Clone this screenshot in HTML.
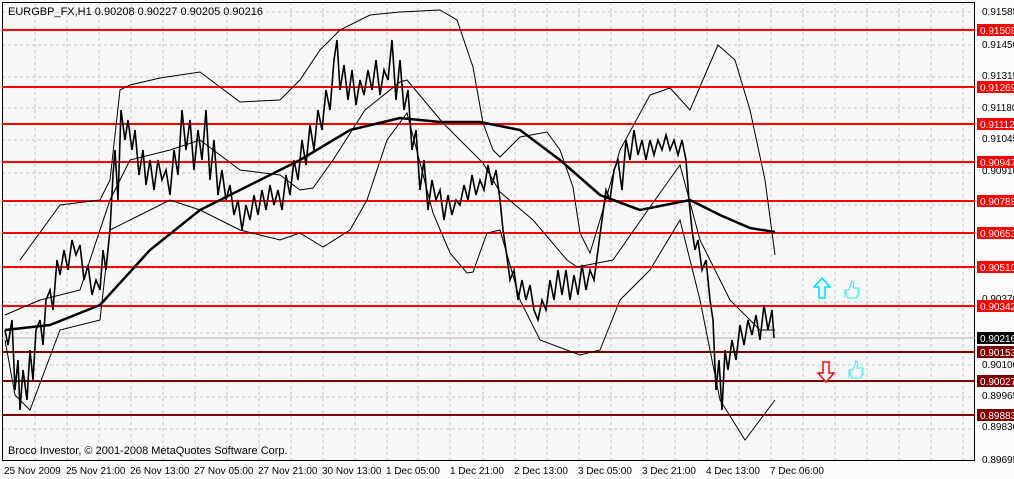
<!DOCTYPE html><html><head><style>body{margin:0;background:#fff}svg{display:block;font-family:"Liberation Sans",sans-serif}</style></head><body>
<svg width="1014" height="479" viewBox="0 0 1014 479">
<rect width="1014" height="479" fill="#fbfbfb"/>
<rect x="2" y="2" width="973" height="459" fill="#f7f7f7"/>
<g stroke="#c4c4c4" stroke-dasharray="3,3" stroke-width="1">
<path d="M35 2V460M67 2V460M99 2V460M131 2V460M163 2V460M195 2V460M227 2V460M259 2V460M291 2V460M323 2V460M355 2V460M387 2V460M418 2V460M450 2V460M483 2V460M515 2V460M547 2V460M579 2V460M611 2V460M643 2V460M675 2V460M707 2V460M739 2V460M771 2V460M803 2V460M835 2V460M867 2V460M899 2V460M931 2V460M963 2V460"/>
<path d="M2 12H975M2 45H975M2 77H975M2 108H975M2 140H975M2 173H975M2 205H975M2 237H975M2 268H975M2 302H975M2 333H975M2 365H975M2 397H975M2 429H975"/>
</g>
<rect x="2.5" y="2.5" width="972" height="458" fill="none" stroke="#000"/>
<g stroke="#f00" stroke-width="2"><path d="M2 30H975M2 87H975M2 124H975M2 162H975M2 201H975M2 233H975M2 267H975M2 306H975"/></g>
<g stroke="#800000" stroke-width="2"><path d="M2 352H975M2 381H975M2 415H975"/></g>
<path d="M2 338H975" stroke="#b0b0b0"/>
<polyline fill="none" stroke="#000" stroke-width="1" points="20,260 60,205 100,200 110,180 120,90 130,85 160,78 200,72 240,102 280,100 300,80 320,50 340,30 370,15 400,12 440,10 457,20 473,67 483,123 493,150 500,157 520,137 547,132 560,150 573,187 580,233 590,253 600,220 620,150 650,95 670,88 690,110 705,75 718,45 735,60 750,110 765,180 775,255"/>
<polyline fill="none" stroke="#000" stroke-width="1" points="5,340 15,395 30,410 45,370 60,330 100,320 110,230 130,220 170,200 200,210 240,230 280,240 300,233 323,247 350,230 367,200 387,140 407,113 433,213 450,253 467,273 473,272 487,233 500,230 520,300 540,340 580,355 600,350 620,300 650,270 680,220 700,300 720,400 745,440 760,420 775,400"/>
<polyline fill="none" stroke="#000" stroke-width="1" points="5,315 40,300 80,290 110,200 130,160 170,150 200,140 240,170 280,175 300,190 313,188 333,160 365,110 400,82 407,80 443,123 483,163 500,192 533,220 567,260 577,267 613,260 650,207 680,165 700,240 730,300 760,330 775,330"/>
<polyline fill="none" stroke="#000" stroke-width="2.5" points="5,330 50,325 100,305 150,250 200,210 250,185 300,160 350,130 400,118 440,122 480,122 520,130 560,160 600,195 640,210 690,200 720,215 750,228 775,232"/>
<polyline fill="none" stroke="#000" stroke-width="1.6" points="5,330 8,345 12,320 15,390 18,360 20,410 23,370 27,400 30,350 33,380 36,330 40,320 43,345 46,300 50,290 53,310 57,260 60,275 64,250 68,270 72,240 76,255 80,245 84,280 88,265 92,295 96,280 100,290 103,250 106,270 110,230 113,175 115,150 118,200 121,110 125,140 128,120 132,150 135,130 139,175 143,150 146,185 150,160 154,190 158,160 162,180 166,170 170,195 174,150 178,175 182,110 186,150 190,120 194,170 198,130 202,160 206,110 210,180 214,140 218,195 222,170 226,200 230,185 234,215 238,200 242,230 246,205 250,220 254,195 258,215 262,190 266,210 270,185 274,205 278,190 282,210 286,175 290,195 294,160 298,180 302,140 306,165 310,125 314,150 318,110 322,130 326,90 330,110 334,60 337,40 340,90 344,65 348,100 352,70 356,105 360,80 364,95 368,70 372,90 376,60 380,95 384,70 388,80 392,40 396,100 400,60 404,110 408,90 412,150 416,130 420,190 424,160 428,210 432,180 436,200 440,190 444,220 448,195 452,215 456,200 460,205 464,185 468,200 472,175 476,195 480,180 484,190 488,165 492,185 496,170 500,200 503,230 506,250 510,280 514,270 518,300 522,280 526,300 530,285 534,310 538,320 542,300 546,310 550,280 554,300 558,270 562,295 566,270 570,300 574,275 578,295 582,265 586,290 590,270 594,280 598,250 602,220 606,190 610,200 614,170 618,160 622,190 626,140 630,160 634,130 638,155 642,140 646,160 650,140 654,155 658,140 662,150 666,135 670,150 674,140 678,155 682,140 686,160 689,200 692,230 695,250 698,240 702,270 706,260 710,300 713,320 716,390 719,360 722,410 725,350 728,370 732,340 736,360 740,325 744,345 748,320 752,335 756,315 760,340 764,305 768,330 772,310 774,338"/>
<text x="8" y="15" font-size="11">EURGBP_FX,H1  0.90208 0.90227 0.90205 0.90216</text>
<text x="8" y="454" font-size="11">Broco Investor, © 2001-2008 MetaQuotes Software Corp.</text>
<path d="M822 278l-8 9h5v11h6v-11h5z" fill="#e8ffff" stroke="#0de" stroke-width="1.5"/>
<path d="M826 382l-8-9h5v-11h6v11h5z" fill="#fff" stroke="#f00" stroke-width="1.5"/>
<g fill="none" stroke="#2ee" stroke-width="1">
<path d="M845 290h4l3-9 2 1-1 6h6v2h-1v2h1v2h-1v2h-1v2h-9z M845 290v8"/>
<path d="M849 370h4l3-9 2 1-1 6h6v2h-1v2h1v2h-1v2h-1v2h-9z M849 370v8"/>
</g>
<g font-size="10" fill="#000">
<text x="982" y="15">0.91585</text><text x="982" y="48">0.91450</text><text x="982" y="79">0.91315</text><text x="982" y="111">0.91180</text><text x="982" y="142">0.91045</text><text x="982" y="174">0.90910</text><text x="982" y="302">0.90370</text><text x="982" y="368">0.90100</text><text x="982" y="399">0.89965</text><text x="982" y="430">0.89830</text><text x="982" y="463">0.89695</text>
</g>
<g font-size="10" fill="#fff">
<rect x="977" y="24" width="37" height="12" fill="#f00"/><text x="980" y="34">0.91508</text>
<rect x="977" y="81" width="37" height="12" fill="#f00"/><text x="980" y="91">0.91269</text>
<rect x="977" y="118" width="37" height="12" fill="#f00"/><text x="980" y="128">0.91112</text>
<rect x="977" y="156" width="37" height="12" fill="#f00"/><text x="980" y="166">0.90947</text>
<rect x="977" y="195" width="37" height="12" fill="#f00"/><text x="980" y="205">0.90788</text>
<rect x="977" y="227" width="37" height="12" fill="#f00"/><text x="980" y="237">0.90653</text>
<rect x="977" y="261" width="37" height="12" fill="#f00"/><text x="980" y="271">0.90510</text>
<rect x="977" y="300" width="37" height="12" fill="#f00"/><text x="980" y="310">0.90342</text>
<rect x="977" y="332" width="37" height="12" fill="#000"/><text x="980" y="342">0.90216</text>
<rect x="977" y="346" width="37" height="12" fill="#800000"/><text x="980" y="356">0.90153</text>
<rect x="977" y="375" width="37" height="12" fill="#800000"/><text x="980" y="385">0.90027</text>
<rect x="977" y="409" width="37" height="12" fill="#800000"/><text x="980" y="419">0.89883</text>
</g>
<g font-size="10">
<text x="4" y="474">25 Nov 2009</text><text x="66" y="474">25 Nov 21:00</text><text x="130" y="474">26 Nov 13:00</text><text x="194" y="474">27 Nov 05:00</text><text x="258" y="474">27 Nov 21:00</text><text x="322" y="474">30 Nov 13:00</text><text x="386" y="474">1 Dec 05:00</text><text x="450" y="474">1 Dec 21:00</text><text x="514" y="474">2 Dec 13:00</text><text x="578" y="474">3 Dec 05:00</text><text x="642" y="474">3 Dec 21:00</text><text x="706" y="474">4 Dec 13:00</text><text x="770" y="474">7 Dec 06:00</text>
</g>
</svg></body></html>
